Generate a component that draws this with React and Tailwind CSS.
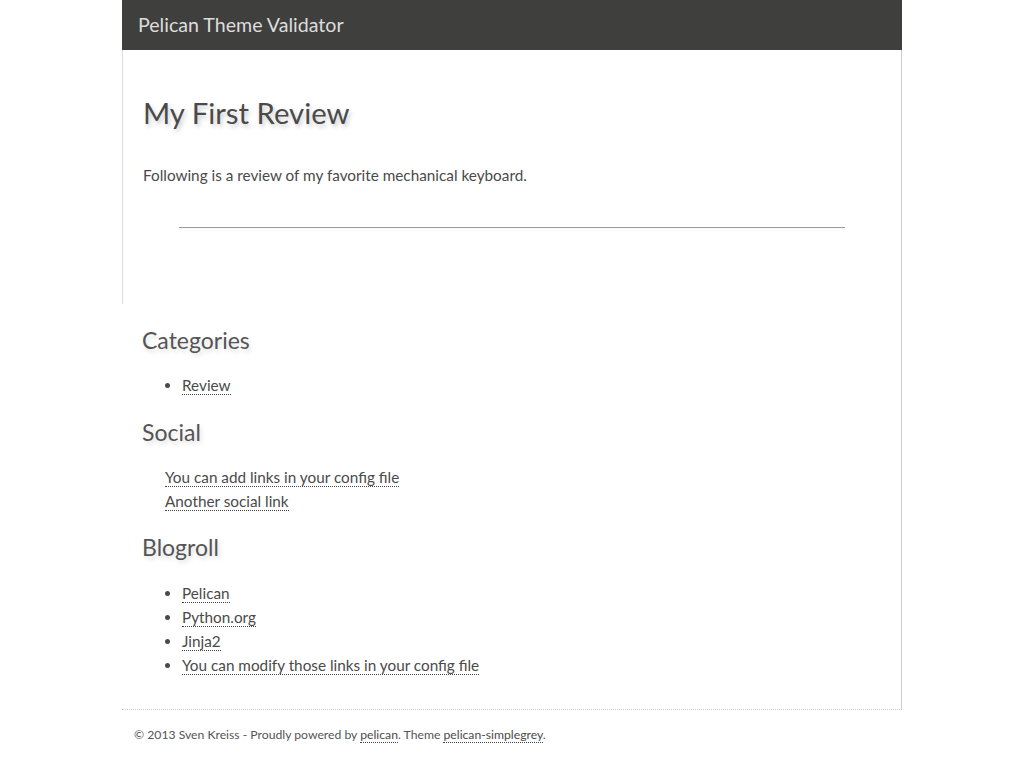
import React from 'react';

const font = { fontFamily: 'Lato, "Open Sans", "Liberation Sans", sans-serif' };

function Link({ children }) {
  return (
    <a href="#" className="text-[#4a4a4a] border-b border-dotted border-[#444] no-underline">
      {children}
    </a>
  );
}

export default function App() {
  return (
    <div className="min-h-screen bg-white" style={font}>
      <div className="w-[780px] ml-[122px]">
        <header className="h-[50px] bg-[#3f3f3d] flex items-center px-4">
          <span className="text-[19.6px] text-[#dddddd] leading-none">Pelican Theme Validator</span>
        </header>

        <article className="border-l border-[#dddddd] border-r border-r-[#cccccc] border-r-dotted pl-[20px] pr-[20px] pt-[43px] pb-[76px]">
          <h1 className="text-[29.3px] leading-[40px] text-[#4a4a4a] [text-shadow:2px_3px_4px_#ccc]">My First Review</h1>
          <p className="mt-[30px] text-[15.3px] leading-6 text-[#4a4a4a]">
            Following is a review of my favorite mechanical keyboard.
          </p>
          <hr className="mt-[40px] w-[666px] mx-auto border-0 border-t border-[#999] shadow-[0_2px_3px_#eee]" />
        </article>

        <aside className="border-r border-[#cccccc] pl-[20px] pt-[20px] pb-[32px] text-[#4a4a4a]">
          <h2 className="text-[23px] leading-8 text-[#555] [text-shadow:2px_3px_4px_#ddd]">Categories</h2>
          <ul className="mt-[17px] list-disc pl-[40px] text-[15.3px] leading-6">
            <li><Link>Review</Link></li>
          </ul>

          <h2 className="mt-[19px] text-[23px] leading-8 text-[#555] [text-shadow:2px_3px_4px_#ddd]">Social</h2>
          <div className="mt-[17px] pl-[23px] text-[15.3px] leading-6">
            <div><Link>You can add links in your config file</Link></div>
            <div><Link>Another social link</Link></div>
          </div>

          <h2 className="mt-[18px] text-[23px] leading-8 text-[#555] [text-shadow:2px_3px_4px_#ddd]">Blogroll</h2>
          <ul className="mt-[18px] list-disc pl-[40px] text-[15.3px] leading-6">
            <li><Link>Pelican</Link></li>
            <li><Link>Python.org</Link></li>
            <li><Link>Jinja2</Link></li>
            <li><Link>You can modify those links in your config file</Link></li>
          </ul>
        </aside>

        <footer className="border-t border-dotted border-[#cccccc] pt-[15px] pl-[12px] text-[12.2px] leading-5 text-[#555]">
          © 2013 Sven Kreiss - Proudly powered by <Link>pelican</Link>. Theme <Link>pelican-simplegrey</Link>.
        </footer>
      </div>
    </div>
  );
}
